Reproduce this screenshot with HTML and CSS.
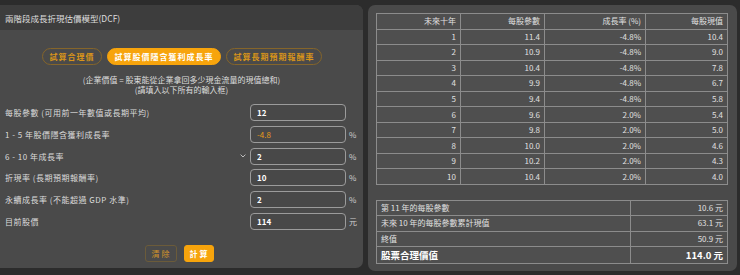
FILE: index.html
```html
<!DOCTYPE html>
<html lang="zh-Hant">
<head>
<meta charset="utf-8">
<title>兩階段成長折現估價模型(DCF)</title>
<link rel="stylesheet" href="styles.css">
</head>
<body>
<div class="page">
  <section class="calc">
    <header class="calc-head">兩階段成長折現估價模型(DCF)</header>
    <div class="calc-body">
      <div class="modes">
        <button class="mode">試算合理價</button>
        <button class="mode active">試算股價隱含獲利成長率</button>
        <button class="mode">試算長期預期報酬率</button>
      </div>
      <p class="desc">(企業價值 = 股東能從企業拿回多少現金流量的現值總和)<br>(請填入以下所有的輸入框)</p>
      <div class="form">
        <div class="row"><label class="lbl">每股參數 (可用前一年數值或長期平均)</label><input class="field" value="12"><span class="unit"></span></div>
        <div class="row"><label class="lbl">1 - 5 年股價隱含獲利成長率</label><input class="field result" value="-4.8"><span class="unit">%</span></div>
        <div class="row"><label class="lbl">6 - 10 年成長率<svg class="chev" viewBox="0 0 6 4" width="6" height="4"><path d="M0.6 0.6 L3 3 L5.4 0.6" fill="none" stroke="#bdbdbd" stroke-width="1"/></svg></label><input class="field" value="2"><span class="unit">%</span></div>
        <div class="row"><label class="lbl">折現率 (長期預期報酬率)</label><input class="field" value="10"><span class="unit">%</span></div>
        <div class="row"><label class="lbl">永續成長率 (不能超過 GDP 水準)</label><input class="field" value="2"><span class="unit">%</span></div>
        <div class="row"><label class="lbl">目前股價</label><input class="field" value="114"><span class="unit">元</span></div>
      </div>
      <div class="actions">
        <button class="act clear">清除</button>
        <button class="act go">計算</button>
      </div>
    </div>
  </section>
  <section class="results">
    <table class="grid">
      <colgroup><col style="width:84px"><col style="width:84px"><col style="width:101px"><col style="width:82px"></colgroup>
      <thead><tr><th>未來十年</th><th>每股參數</th><th>成長率 (%)</th><th>每股現值</th></tr></thead>
      <tbody>
        <tr><td>1</td><td>11.4</td><td>-4.8%</td><td>10.4</td></tr>
        <tr><td>2</td><td>10.9</td><td>-4.8%</td><td>9.0</td></tr>
        <tr><td>3</td><td>10.4</td><td>-4.8%</td><td>7.8</td></tr>
        <tr><td>4</td><td>9.9</td><td>-4.8%</td><td>6.7</td></tr>
        <tr><td>5</td><td>9.4</td><td>-4.8%</td><td>5.8</td></tr>
        <tr><td>6</td><td>9.6</td><td>2.0%</td><td>5.4</td></tr>
        <tr><td>7</td><td>9.8</td><td>2.0%</td><td>5.0</td></tr>
        <tr><td>8</td><td>10.0</td><td>2.0%</td><td>4.6</td></tr>
        <tr><td>9</td><td>10.2</td><td>2.0%</td><td>4.3</td></tr>
        <tr><td>10</td><td>10.4</td><td>2.0%</td><td>4.0</td></tr>
      </tbody>
    </table>
    <table class="summary">
      <colgroup><col style="width:254px"><col style="width:97px"></colgroup>
      <tbody>
        <tr><td>第 11 年的每股參數</td><td class="num">10.6 元</td></tr>
        <tr><td>未來 10 年的每股參數累計現值</td><td class="num">63.1 元</td></tr>
        <tr><td>終值</td><td class="num">50.9 元</td></tr>
        <tr class="total"><td>股票合理價值</td><td class="num">114.0 元</td></tr>
      </tbody>
    </table>
  </section>
</div>
</body>
</html>
```
FILE: styles.css
```css
* { box-sizing: border-box; }
html, body { margin: 0; padding: 0; }
body {
  background: #2c2c2c;
  font-family: "Noto Sans CJK TC", "Noto Sans", sans-serif;
  color: #dcdcdc;
  width: 740px;
  height: 275px;
  overflow: hidden;
}
.page {
  display: flex;
  align-items: flex-start;
  gap: 5px;
  padding-top: 5px;
}
.calc {
  width: 363px;
  height: 263px;
  background: #4a4a4a;
  border-radius: 0 7px 7px 0;
  overflow: hidden;
}
.calc-head {
  height: 25px;
  background: #3d3d3d;
  display: flex;
  align-items: center;
  padding-left: 5px;
  font-size: 8.5px;
  color: #dedede;
}
.calc-body { padding-top: 18px; }
.modes {
  display: flex;
  justify-content: center;
  gap: 5px;
}
.mode {
  height: 17px;
  padding: 0 6px 0 7px;
  border-radius: 9px;
  border: 1px solid #85652a;
  background: transparent;
  color: #d99519;
  font-family: inherit;
  font-size: 8px;
  font-weight: 700;
  letter-spacing: 1px;
  line-height: 15px;
  white-space: nowrap;
  cursor: pointer;
}
.mode.active {
  background: #f7a40c;
  border-color: #f7a40c;
  color: #ffffff;
}
.desc {
  margin: 10px 0 0;
  text-align: center;
  font-size: 8px;
  line-height: 10px;
  color: #dddddd;
}
.form {
  margin-top: 9px;
  display: flex;
  flex-direction: column;
  gap: 4.8px;
}
.row {
  display: grid;
  grid-template-columns: 1fr 96px 17px;
  align-items: center;
  height: 17px;
}
.lbl {
  display: flex;
  align-items: center;
  justify-content: space-between;
  padding-left: 5px;
  padding-right: 4px;
  font-size: 8px;
  letter-spacing: 0.5px;
  color: #dcdcdc;
}
.chev { display: block; }
.field {
  width: 96px;
  height: 17px;
  border: 1px solid #9b9b9b;
  border-radius: 4px;
  background: #484848;
  padding: 0 0 0 6px;
  font-family: "Noto Sans CJK TC", "Noto Sans", sans-serif;
  font-size: 8px;
  font-weight: 700;
  color: #ffffff;
  outline: none;
}
.field.result { color: #e79a1b; font-weight: 400; }
.unit {
  padding-left: 3px;
  font-size: 8px;
  color: #cfcfcf;
}
.actions {
  display: flex;
  justify-content: center;
  gap: 7px;
  margin-top: 15px;
  padding-right: 5px;
}
.act {
  height: 17px;
  padding: 0 4px 0 6px;
  border-radius: 3px;
  font-family: inherit;
  font-size: 8px;
  letter-spacing: 2px;
  line-height: 15px;
  white-space: nowrap;
  cursor: pointer;
}
.act.clear {
  border: 1px solid #6b5b3a;
  background: transparent;
  color: #d0932a;
}
.act.go {
  padding: 0 3px 0 5px;
  border: 1px solid #f7a40c;
  background: #f7a40c;
  color: #ffffff;
  font-weight: 700;
}
.results {
  width: 369px;
  height: 266px;
  background: #4a4a4a;
  border-radius: 7px;
  padding: 8px 10px 7px 8px;
  display: flex;
  flex-direction: column;
  justify-content: space-between;
}
table {
  width: 351px;
  border-collapse: collapse;
  table-layout: fixed;
  font-size: 8px;
  color: #e0e0e0;
}
.grid th, .grid td {
  border: 1px solid #8c8c8c;
  background: #4f4f4f;
  text-align: right;
  padding: 0 4px 0 0;
  font-weight: 400;
  height: 15.55px;
  line-height: 10px;
}
.summary td {
  border: 1px solid #8c8c8c;
  background: #4f4f4f;
  padding: 0 4px;
  height: 15.5px;
  line-height: 10px;
}
.summary .num { text-align: right; }
.summary .total td {
  height: 17px;
  font-size: 9.5px;
  font-weight: 700;
  color: #ffffff;
}
```
